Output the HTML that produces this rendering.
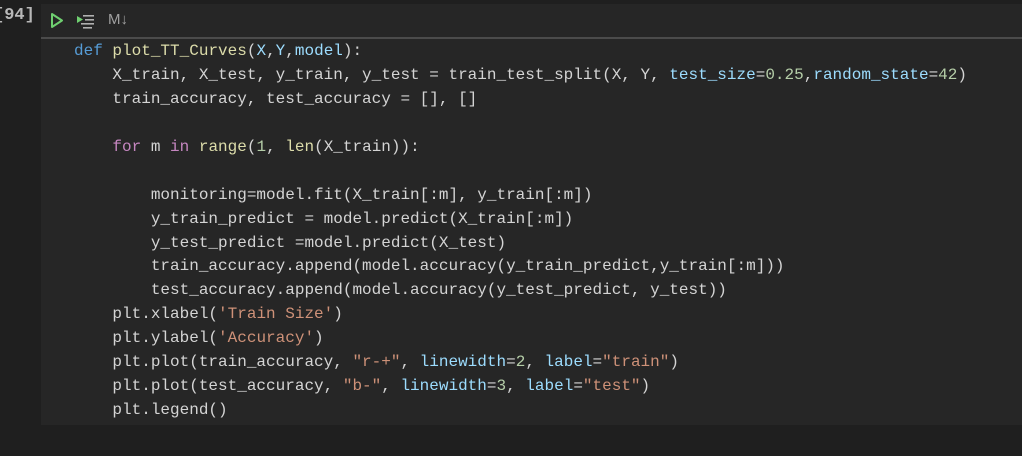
<!DOCTYPE html>
<html><head><meta charset="utf-8"><style>
html,body{margin:0;padding:0;width:1022px;height:456px;overflow:hidden;background:#1f1f1f;}
.cell{position:absolute;left:41px;top:4px;width:981px;height:421px;background:#262626;}
.bar{position:absolute;left:41px;top:37px;width:981px;height:2px;background:#4b4b4b;}
.num{position:absolute;left:-6px;top:6px;font:bold 17px "Liberation Mono",monospace;color:#b8b8b8;}
pre{position:absolute;left:74px;top:40px;margin:0;font:16px/23.93px "Liberation Mono",monospace;color:#d4d4d4;}
.k{color:#569cd6}.f{color:#dcdcaa}.p{color:#9cdcfe}.n{color:#b5cea8}.s{color:#ce9178}.c{color:#c586c0}
.md{position:absolute;left:108px;top:11px;font:15px "Liberation Sans",sans-serif;color:#a0a0a0;}
</style></head><body>
<div class="cell"></div>
<div class="bar"></div>
<div class="num">[94]</div>
<svg style="position:absolute;left:48px;top:10px" width="70" height="22">
<path d="M4 4 L14 10.5 L4 17 Z" fill="none" stroke="#6fcf70" stroke-width="2" stroke-linejoin="round"/>
<path d="M29 6 L35 9.5 L29 13 Z" fill="#6fcf70"/>
<rect x="35" y="5" width="11" height="1.6" fill="#b0b0b0"/>
<rect x="37" y="9" width="9" height="1.6" fill="#b0b0b0"/>
<rect x="33" y="13" width="13" height="1.6" fill="#b0b0b0"/>
<rect x="35" y="17" width="9" height="1.6" fill="#b0b0b0"/>
</svg>
<div class="md">M↓</div>
<pre><span class="k">def</span> <span class="f">plot_TT_Curves</span>(<span class="p">X</span>,<span class="p">Y</span>,<span class="p">model</span>):
    X_train, X_test, y_train, y_test = train_test_split(X, Y, <span class="p">test_size</span>=<span class="n">0.25</span>,<span class="p">random_state</span>=<span class="n">42</span>)
    train_accuracy, test_accuracy = [], []

    <span class="c">for</span> m <span class="c">in</span> <span class="f">range</span>(<span class="n">1</span>, <span class="f">len</span>(X_train)):

        monitoring=model.fit(X_train[:m], y_train[:m])
        y_train_predict = model.predict(X_train[:m])
        y_test_predict =model.predict(X_test)
        train_accuracy.append(model.accuracy(y_train_predict,y_train[:m]))
        test_accuracy.append(model.accuracy(y_test_predict, y_test))
    plt.xlabel(<span class="s">'Train Size'</span>)
    plt.ylabel(<span class="s">'Accuracy'</span>)
    plt.plot(train_accuracy, <span class="s">"r-+"</span>, <span class="p">linewidth</span>=<span class="n">2</span>, <span class="p">label</span>=<span class="s">"train"</span>)
    plt.plot(test_accuracy, <span class="s">"b-"</span>, <span class="p">linewidth</span>=<span class="n">3</span>, <span class="p">label</span>=<span class="s">"test"</span>)
    plt.legend()</pre>
</body></html>
